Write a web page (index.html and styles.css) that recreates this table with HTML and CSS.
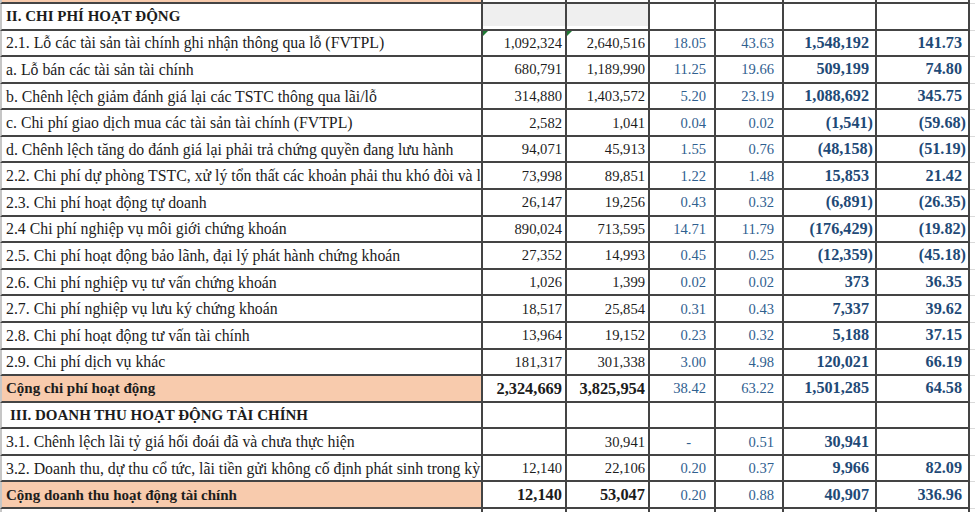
FILE: index.html
```html
<!DOCTYPE html>
<html lang="vi">
<head>
<meta charset="utf-8">
<title>Chi phí hoạt động</title>
<link rel="stylesheet" href="styles.css">
</head>
<body>
<div class="sheet">
  <div class="row top">
    <div class="c label total"></div><div class="c"></div><div class="c"></div><div class="c"></div><div class="c"></div><div class="c"></div><div class="c"></div><div class="c pad"></div>
  </div>
  <div class="row">
    <div class="c label head">II. CHI PHÍ HOẠT ĐỘNG</div><div class="c shade"></div><div class="c shade"></div><div class="c"></div><div class="c"></div><div class="c"></div><div class="c"></div><div class="c pad"></div>
  </div>
  <div class="row">
    <div class="c label">2.1. Lỗ các tài sản tài chính ghi nhận thông qua lỗ (FVTPL)</div><div class="c flag">1,092,324</div><div class="c flag">2,640,516</div><div class="c pct">18.05</div><div class="c pct">43.63</div><div class="c var pos">1,548,192</div><div class="c var pos">141.73</div><div class="c pad"></div>
  </div>
  <div class="row">
    <div class="c label">a. Lỗ bán các tài sản tài chính</div><div class="c">680,791</div><div class="c">1,189,990</div><div class="c pct">11.25</div><div class="c pct">19.66</div><div class="c var pos">509,199</div><div class="c var pos">74.80</div><div class="c pad"></div>
  </div>
  <div class="row">
    <div class="c label">b. Chênh lệch giảm đánh giá lại các TSTC thông qua lãi/lỗ</div><div class="c">314,880</div><div class="c">1,403,572</div><div class="c pct">5.20</div><div class="c pct">23.19</div><div class="c var pos">1,088,692</div><div class="c var pos">345.75</div><div class="c pad"></div>
  </div>
  <div class="row">
    <div class="c label">c. Chi phí giao dịch mua các tài sản tài chính (FVTPL)</div><div class="c">2,582</div><div class="c">1,041</div><div class="c pct">0.04</div><div class="c pct">0.02</div><div class="c var">(1,541)</div><div class="c var">(59.68)</div><div class="c pad"></div>
  </div>
  <div class="row">
    <div class="c label">d. Chênh lệch tăng do đánh giá lại phải trả chứng quyền đang lưu hành</div><div class="c">94,071</div><div class="c">45,913</div><div class="c pct">1.55</div><div class="c pct">0.76</div><div class="c var">(48,158)</div><div class="c var">(51.19)</div><div class="c pad"></div>
  </div>
  <div class="row">
    <div class="c label">2.2. Chi phí dự phòng TSTC, xử lý tổn thất các khoản phải thu khó đòi và lỗ</div><div class="c">73,998</div><div class="c">89,851</div><div class="c pct">1.22</div><div class="c pct">1.48</div><div class="c var pos">15,853</div><div class="c var pos">21.42</div><div class="c pad"></div>
  </div>
  <div class="row">
    <div class="c label">2.3. Chi phí hoạt động tự doanh</div><div class="c">26,147</div><div class="c">19,256</div><div class="c pct">0.43</div><div class="c pct">0.32</div><div class="c var">(6,891)</div><div class="c var">(26.35)</div><div class="c pad"></div>
  </div>
  <div class="row">
    <div class="c label">2.4 Chi phí nghiệp vụ môi giới chứng khoán</div><div class="c">890,024</div><div class="c">713,595</div><div class="c pct">14.71</div><div class="c pct">11.79</div><div class="c var">(176,429)</div><div class="c var">(19.82)</div><div class="c pad"></div>
  </div>
  <div class="row">
    <div class="c label">2.5. Chi phí hoạt động bảo lãnh, đại lý phát hành chứng khoán</div><div class="c">27,352</div><div class="c">14,993</div><div class="c pct">0.45</div><div class="c pct">0.25</div><div class="c var">(12,359)</div><div class="c var">(45.18)</div><div class="c pad"></div>
  </div>
  <div class="row">
    <div class="c label">2.6. Chi phí nghiệp vụ tư vấn chứng khoán</div><div class="c">1,026</div><div class="c">1,399</div><div class="c pct">0.02</div><div class="c pct">0.02</div><div class="c var pos">373</div><div class="c var pos">36.35</div><div class="c pad"></div>
  </div>
  <div class="row">
    <div class="c label">2.7. Chi phí nghiệp vụ lưu ký chứng khoán</div><div class="c">18,517</div><div class="c">25,854</div><div class="c pct">0.31</div><div class="c pct">0.43</div><div class="c var pos">7,337</div><div class="c var pos">39.62</div><div class="c pad"></div>
  </div>
  <div class="row">
    <div class="c label">2.8. Chi phí hoạt động tư vấn tài chính</div><div class="c">13,964</div><div class="c">19,152</div><div class="c pct">0.23</div><div class="c pct">0.32</div><div class="c var pos">5,188</div><div class="c var pos">37.15</div><div class="c pad"></div>
  </div>
  <div class="row">
    <div class="c label">2.9. Chi phí dịch vụ khác</div><div class="c">181,317</div><div class="c">301,338</div><div class="c pct">3.00</div><div class="c pct">4.98</div><div class="c var pos">120,021</div><div class="c var pos">66.19</div><div class="c pad"></div>
  </div>
  <div class="row">
    <div class="c label head total">Cộng chi phí hoạt động</div><div class="c strong">2,324,669</div><div class="c strong">3,825,954</div><div class="c pct">38.42</div><div class="c pct">63.22</div><div class="c var pos">1,501,285</div><div class="c var pos">64.58</div><div class="c pad"></div>
  </div>
  <div class="row">
    <div class="c label head indent">III. DOANH THU HOẠT ĐỘNG TÀI CHÍNH</div><div class="c"></div><div class="c"></div><div class="c"></div><div class="c"></div><div class="c"></div><div class="c"></div><div class="c pad"></div>
  </div>
  <div class="row">
    <div class="c label">3.1. Chênh lệch lãi tỷ giá hối đoái đã và chưa thực hiện</div><div class="c"></div><div class="c">30,941</div><div class="c pct dash">-</div><div class="c pct">0.51</div><div class="c var pos">30,941</div><div class="c var"></div><div class="c pad"></div>
  </div>
  <div class="row">
    <div class="c label">3.2. Doanh thu, dự thu cổ tức, lãi tiền gửi không cố định phát sinh trong kỳ</div><div class="c">12,140</div><div class="c">22,106</div><div class="c pct">0.20</div><div class="c pct">0.37</div><div class="c var pos">9,966</div><div class="c var pos">82.09</div><div class="c pad"></div>
  </div>
  <div class="row">
    <div class="c label head total">Cộng doanh thu hoạt động tài chính</div><div class="c strong">12,140</div><div class="c strong">53,047</div><div class="c pct">0.20</div><div class="c pct">0.88</div><div class="c var pos">40,907</div><div class="c var pos">336.96</div><div class="c pad"></div>
  </div>
  <div class="row">
    <div class="c label"></div><div class="c"></div><div class="c"></div><div class="c"></div><div class="c"></div><div class="c"></div><div class="c"></div><div class="c pad"></div>
  </div>
</div>
</body>
</html>
```

FILE: styles.css
```css
html, body {
  margin: 0;
  padding: 0;
  background: #ffffff;
  overflow: hidden;
}

.sheet {
  display: flex;
  flex-direction: column;
  width: 975px;
  height: 512px;
  overflow: hidden;
  font-family: "Liberation Serif", "Times New Roman", serif;
}

.row {
  flex: none;
  display: grid;
  grid-template-columns: 483px 84px 83px 66px 68px 93px 93px 1fr;
  height: 26.58px;
}

.row.top {
  height: 4px;
}

.c {
  box-sizing: border-box;
  position: relative;
  display: flex;
  align-items: center;
  justify-content: flex-end;
  min-width: 0;
  padding: 1px 3px 0 0;
  border-right: 2px solid #444444;
  border-bottom: 2px solid #444444;
  white-space: nowrap;
  overflow: hidden;
  font-size: 14.6px;
  color: #1c1c1c;
}

.row.top .c {
  padding: 0;
}

.c.label {
  justify-content: flex-start;
  padding-left: 4px;
  padding-right: 0;
  border-left: 2px solid #c6c6c6;
  font-size: 15.8px;
}

.c.head {
  font-weight: bold;
  font-size: 15px;
}

.c.indent {
  padding-left: 8px;
}

.c.total {
  background: #f8cbad;
}

.c.shade {
  background: #efefef;
  box-shadow: inset 0 -3px 0 #ffffff;
}

.c.strong {
  font-weight: bold;
  font-size: 16.4px;
}

.c.pct {
  color: #30608f;
  padding-right: 8px;
}

.c.dash {
  padding-right: 23px;
}

.c.var {
  color: #1f4a77;
  font-weight: bold;
  font-size: 16.2px;
  padding-right: 2px;
}

.c.var.pos {
  padding-right: 6px;
}

.c.pad {
  border-right: none;
  border-bottom: 1px solid #dadada;
}

.c.flag::before {
  content: "";
  position: absolute;
  left: 0;
  top: 0;
  width: 0;
  height: 0;
  border-top: 5px solid #1f7a35;
  border-right: 5px solid transparent;
}
```
